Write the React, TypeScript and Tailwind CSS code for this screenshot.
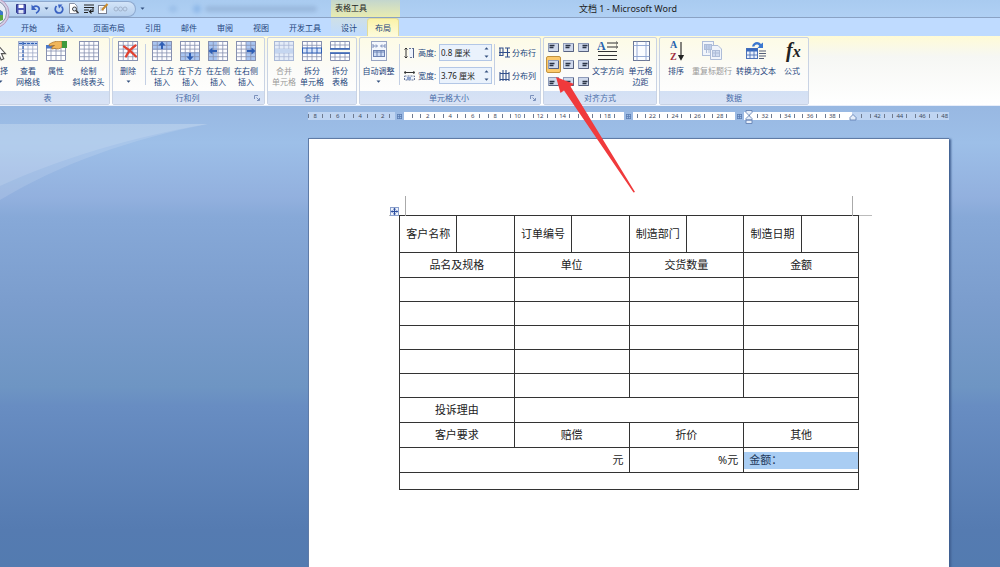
import type { ReactNode } from "react";

/* ---------- icons ---------- */

const LINE = "#8791b0";
const BLUE = "#2f5fb5";

type GridProps = { cols?: number; rows?: number; children?: ReactNode; line?: string; under?: ReactNode };

function GridIcon({ cols = 4, rows = 5, children, line = LINE, under }: GridProps) {
  const xs = Array.from({ length: cols - 1 }, (_, i) => 0.5 + (19 / cols) * (i + 1));
  const ys = Array.from({ length: rows - 1 }, (_, i) => 0.5 + (19 / rows) * (i + 1));
  return (
    <svg width="20" height="20" viewBox="0 0 20 20" aria-hidden="true">
      <rect x="0.5" y="0.5" width="19" height="19" fill="#fdfdff" />
      {under}
      <path
        d={xs.map((x) => `M${x} 0.5V19.5`).join("") + ys.map((y) => `M0.5 ${y}H19.5`).join("")}
        stroke={line}
        strokeWidth="0.8"
        fill="none"
      />
      <rect x="0.5" y="0.5" width="19" height="19" fill="none" stroke={line} />
      {children}
    </svg>
  );
}

const CursorIcon = () => (
  <svg width="20" height="20" viewBox="0 0 20 20" aria-hidden="true">
    <path d="M5 1V17L8.8 13.5L11.2 19L13.8 17.8L11.4 12.6H15.5Z" fill="#fff" stroke="#555" strokeWidth="1.1" />
  </svg>
);

const ViewGridIcon = () => (
  <GridIcon under={<rect x="1" y="1" width="18" height="4" fill="#b7cdf0" />} line="#a0abc8">
    <path d="M1 2.5H19M5 1V19" stroke={BLUE} strokeWidth="1.2" strokeDasharray="3 1" />
  </GridIcon>
);

const PropertiesIcon = () => (
  <svg width="22" height="20" viewBox="0 0 22 20" aria-hidden="true">
    <path d="M1.5 5.500H20.500V19.500H1.500Z" fill="#fff" stroke={LINE} />
    <path d="M1.500 10H20.500M1.500 14.500H20.500M6 5V19.500M11 5V19.500M16 5V19.500" stroke={LINE} strokeWidth="0.8" />
    <rect x="1" y="4" width="11" height="3.500" fill="#4b79c9" />
    <path d="M4 3.500C7 1 12 -0.500 17 0.500V6C15 8 12 8.500 10 7.500L7 8C6 6.500 8 5 9.500 4.500L4.500 5Z" fill="#f0b65a" stroke="#a4671c" strokeWidth="0.7" />
    <rect x="17" y="0" width="5" height="7" fill="#3f9a3c" />
  </svg>
);

const DeleteIcon = () => (
  <GridIcon>
    <path d="M6 5.500Q12 9 18 15.500M17.500 4.500Q11 9 8 15.500" stroke="#e2412f" strokeWidth="2.200" fill="none" strokeLinecap="round" />
  </GridIcon>
);

const InsertAbove = () => (
  <GridIcon under={<rect x="1" y="1" width="18" height="8" fill="#a9c5f1" />}>
    <path d="M10 0.500L13.500 4.500H11V8H9V4.500H6.500Z" fill={BLUE} />
  </GridIcon>
);
const InsertBelow = () => (
  <GridIcon under={<rect x="1" y="11" width="18" height="8" fill="#a9c5f1" />}>
    <path d="M10 19.500L13.500 15.500H11V12H9V15.500H6.500Z" fill={BLUE} />
  </GridIcon>
);
const InsertLeft = () => (
  <GridIcon under={<rect x="1" y="1" width="8" height="18" fill="#a9c5f1" />}>
    <path d="M0.500 10L4.500 6.500V9H9V11H4.500V13.500Z" fill={BLUE} />
  </GridIcon>
);
const InsertRight = () => (
  <GridIcon under={<rect x="10" y="1" width="9" height="18" fill="#a9c5f1" />}>
    <path d="M19.500 10L15.500 6.500V9H11V11H15.500V13.500Z" fill={BLUE} />
  </GridIcon>
);

const MergeIcon = () => (
  <GridIcon line="#a9b8d6" under={<rect x="1" y="1" width="18" height="18" fill="#e4ecf8" />}>
    <rect x="1" y="8" width="18" height="4" fill="#c5d6f0" />
  </GridIcon>
);
const SplitCellsIcon = () => (
  <GridIcon>
    <rect x="0.500" y="7" width="19" height="5" fill="#dbe7fb" stroke={BLUE} />
    <path d="M5 7V12M10 7V12M15 7V12" stroke={BLUE} />
  </GridIcon>
);
const SplitTableIcon = () => (
  <svg width="20" height="20" viewBox="0 0 20 20" aria-hidden="true">
    <path d="M0.500 0.500H19.500V7.500H0.500ZM0.500 12.500H19.500V19.500H0.500Z" fill="#fff" stroke={LINE} />
    <path d="M5 0.500V7.500M10 0.500V7.500M15 0.500V7.500M0.500 4H19.500M5 12.500V19.500M10 12.500V19.500M15 12.500V19.500M0.500 16H19.500" stroke={LINE} strokeWidth="0.800" />
    <path d="M0 8H20M0 12H20" stroke={BLUE} strokeWidth="1.300" />
  </svg>
);

const AutoFitIcon = () => (
  <svg width="20" height="20" viewBox="0 0 20 20" aria-hidden="true">
    <rect x="2.500" y="0.500" width="15" height="19" fill="#f4f7fd" stroke="#98a4c2" />
    <path d="M4 5H8M12 5H16M4 3V7M16 3V7M8.500 5L7 3.500M8.500 5L7 6.500M11.500 5L13 3.500M11.500 5L13 6.500" stroke="#7184b3" strokeWidth="0.900" />
    <rect x="4.500" y="9.500" width="11" height="6" fill="#cfddf5" stroke="#6d82b3" />
    <path d="M8 9.500V15.500M12 9.500V15.500M4.500 11H15.500" stroke="#6d82b3" />
  </svg>
);

const HeightIcon = () => (
  <svg width="11" height="12" viewBox="0 0 11 12" aria-hidden="true">
    <path d="M2 1V11M0.500 2.500L2 1L3.500 2.500M0.500 9.500L2 11L3.500 9.500" stroke="#333" fill="none" />
    <path d="M5 1.500H9.500V10.500H5" fill="#eef3fc" stroke="#6b7898" strokeDasharray="2 1" />
    <path d="M9.500 1V11" stroke="#4f5f88" />
  </svg>
);
const WidthIcon = () => (
  <svg width="11" height="12" viewBox="0 0 11 12" aria-hidden="true">
    <path d="M0.500 2.500H10.500M1.500 1L0.500 2.500L1.500 4M9.500 1L10.500 2.500L9.500 4" stroke="#333" fill="none" />
    <rect x="0.500" y="6" width="10" height="4" fill="#eef3fc" stroke="#6b7898" strokeDasharray="2 1" />
    <rect x="3" y="7" width="4" height="3" fill="#8da3cf" />
  </svg>
);
const DistributeRows = () => (
  <svg width="11" height="11" viewBox="0 0 11 11" aria-hidden="true">
    <path d="M0 1H4.500M6 1H11M0 5.500H11M6 10H11M0 8.500H4.500M1 1V8.500M4 1V8.500M8.500 1V10" stroke="#33508c" strokeWidth="1.100" fill="none" />
  </svg>
);
const DistributeCols = () => (
  <svg width="11" height="11" viewBox="0 0 11 11" aria-hidden="true">
    <path d="M1 2V11M4 0V11M7 0V11M10 2V11M1 3.500H10M1 9.500H10" stroke="#33508c" strokeWidth="1.100" fill="none" />
  </svg>
);

const TextDirectionIcon = () => (
  <svg className="overflow-visible" width="22" height="20" viewBox="0 0 22 20" aria-hidden="true">
    <text x="0" y="9" fontSize="12" fontWeight="700" fontFamily="Liberation Serif, serif" fill="#2763ae">A</text>
    <path d="M10 2H20M10 6H20M1 10.500H20M1 14.500H20M1 18.500H20" stroke="#333" strokeWidth="1.200" />
    <path d="M19 0.500L21 2L19 3.500M19 4.500L21 6L19 7.500" stroke="#333" fill="none" strokeWidth="0.700" />
  </svg>
);
const MarginsIcon = () => (
  <svg width="20" height="20" viewBox="0 0 20 20" aria-hidden="true">
    <rect x="2.500" y="0.500" width="16" height="19" fill="#fbfcff" stroke="#6c7795" />
    <path d="M6 0.500V19.500M15 0.500V19.500M2.500 4.500H18.500M2.500 15.500H18.500" stroke="#8aa2d0" strokeWidth="0.900" />
  </svg>
);
const SortIcon = () => (
  <svg className="overflow-visible" width="20" height="20" viewBox="0 0 20 20" aria-hidden="true">
    <text x="4" y="7" fontSize="10" fontWeight="700" fontFamily="Liberation Serif, serif" fill="#2763ae">A</text>
    <text x="4" y="19" fontSize="10" fontWeight="700" fontFamily="Liberation Serif, serif" fill="#a03040">Z</text>
    <path d="M15 1V17.500M12.800 14.500L15 18.500L17.200 14.500Z" stroke="#222" fill="#222" strokeWidth="1.100" />
  </svg>
);
const RepeatHeaderIcon = () => (
  <svg width="20" height="20" viewBox="0 0 20 20" aria-hidden="true">
    <g stroke="#aebdd8" fill="#f1f5fb">
      <rect x="0.500" y="0.500" width="11" height="14" />
      <path d="M8.500 4.500H16L19.500 8V18.500H8.500Z" />
      <rect x="2.500" y="3.500" width="7" height="5" fill="#bdcdea" />
      <rect x="10.500" y="9.500" width="7" height="6" fill="#cfdbf0" />
      <path d="M4.500 3.500V12M7 3.500V12M10.500 12H17.500M13.500 9.500V15.500" />
    </g>
  </svg>
);
const ConvertIcon = () => (
  <svg width="20" height="20" viewBox="0 0 20 20" aria-hidden="true">
    <rect x="0.500" y="7.500" width="11" height="10" fill="#e9f0fc" stroke="#4d72b8" />
    <path d="M0.500 9H11.500" stroke="#3769be" strokeWidth="3" />
    <path d="M4 9V17.500M8 9V17.500M0.500 14H11.500" stroke="#4d72b8" strokeWidth="0.900" />
    <path d="M13 10H20M13 12.500H20M13 15H20M13 17.500H18" stroke="#555f78" strokeWidth="1.100" />
    <path d="M6 5.500C7 0.500 12.500 -0.500 15 3L17 1.500V7H11.500L13.300 5C11.500 2.800 9 3.300 8.500 5.500Z" fill="#3b78d0" />
  </svg>
);
const FormulaIcon = () => (
  <svg className="overflow-visible" width="20" height="20" viewBox="0 0 20 20" aria-hidden="true">
    <text x="4" y="16" fontSize="20" fontWeight="700" fontStyle="italic" fontFamily="Liberation Serif, serif" fill="#222">
      f<tspan fontSize="16">x</tspan>
    </text>
  </svg>
);

function AlignIcon({ h, v }: { h: number; v: number }) {
  const x = [1.5, 2.5, 4.5][h];
  const y = [2, 3, 4][v];
  return (
    <svg width="11" height="9" viewBox="0 0 11 9" aria-hidden="true">
      <rect x="0.500" y="0.500" width="10" height="8" fill="#cfd9ec" stroke="#8f9cba" />
      <path d="M10.500 1V8.500H1" stroke="#57627f" fill="none" />
      <path d={`M${x} ${y + 0.5}H${x + 5}M${x} ${y + 2.5}H${x + 4}`} stroke="#2b3446" strokeWidth="1.300" />
    </svg>
  );
}

const Caret = () => (
  <svg width="5" height="3" viewBox="0 0 5 3" aria-hidden="true">
    <path d="M0.500 0.500H4.500L2.500 2.700Z" fill="#33507f" />
  </svg>
);

const Launcher = () => (
  <svg width="6" height="6" viewBox="0 0 6 6" aria-hidden="true">
    <path d="M0.500 4V0.500H4M2.500 2.500L5 5M5.500 3V5.500H3" stroke="#7088b5" fill="none" strokeWidth="0.900" />
  </svg>
);

/* ---------- ribbon parts ---------- */

type ToolProps = { icon: ReactNode; lines: string[]; width?: string; disabled?: boolean; caret?: boolean };

function Tool({ icon, lines, width = "w-7", disabled = false, caret = false }: ToolProps) {
  return (
    <button
      type="button"
      disabled={disabled}
      className={`flex shrink-0 flex-col items-center pt-[3px] ${width} ${disabled ? "text-[#9a9a9a]" : "text-[#24457c]"}`}
    >
      {icon}
      <span className="mt-1 flex flex-col items-center whitespace-nowrap leading-[11px]">
        {lines.map((l) => (
          <span key={l}>{l}</span>
        ))}
        {caret && (
          <span className="flex h-[11px] items-center">
            <Caret />
          </span>
        )}
      </span>
    </button>
  );
}

type GroupProps = { title: string; children: ReactNode; launcher?: boolean; className?: string };

function Group({ title, children, launcher = false, className = "" }: GroupProps) {
  return (
    <section
      aria-label={title}
      className="flex shrink-0 flex-col rounded-[2px] border border-[#c9d3e4] bg-linear-to-b from-[#fdfbe6] via-[#fbfbf9] to-white first:-ml-[15px] first:pl-0"
    >
      <div className={`flex h-[53px] ${className}`}>{children}</div>
      <div className="flex h-[13px] items-center bg-linear-to-b from-[#d3e0f4] to-[#d9e3f5] text-[#4a6da8]">
        <span className="flex-1 text-center leading-[12px]">{title}</span>
        {launcher && (
          <button type="button" aria-label={`${title}选项`} className="-ml-2 mr-1">
            <Launcher />
          </button>
        )}
      </div>
    </section>
  );
}

const Separator = () => <div className="mx-0.5 my-1.5 w-px shrink-0 bg-[#c3cfe4]" />;

function SizeField({ id, label, value, icon }: { id: string; label: string; value: string; icon: ReactNode }) {
  return (
    <div className="flex h-[17px] items-center">
      {icon}
      <label htmlFor={id} className="ml-[3px] w-[21px] whitespace-nowrap text-[#24457c]">
        {label}
      </label>
      <div className="flex h-[17px] items-center border border-[#b3c7e6] bg-[#eaf2fc]">
        <input id={id} defaultValue={value} className="h-[15px] w-[42px] pl-px text-[#222] outline-none" />
        <span className="flex w-[9px] flex-col items-center gap-[5px]">
          <button type="button" aria-label={`增加${label}`} className="rotate-180">
            <Caret />
          </button>
          <button type="button" aria-label={`减少${label}`}>
            <Caret />
          </button>
        </span>
      </div>
    </div>
  );
}

/* ---------- window chrome ---------- */

function QuickAccess() {
  return (
    <div className="flex h-4 w-[136px] items-center rounded-r-full border border-l-0 border-[#8ea9cf] bg-linear-to-b from-[#d3e4f8] to-[#b5cfee] pl-4">
      <button type="button" aria-label="保存">
        <svg width="10" height="10" viewBox="0 0 10 10">
          <path d="M0.500 0.500H9.500V9.500H1.500L0.500 8.500Z" fill="#4a55b5" stroke="#30398a" />
          <rect x="2.500" y="0.500" width="5" height="3.500" fill="#fff" />
          <rect x="2.500" y="6" width="5" height="3.500" fill="#dfe5f5" />
        </svg>
      </button>
      <button type="button" aria-label="撤消" className="ml-[5px] flex items-center gap-[3px]">
        <svg width="10" height="10" viewBox="0 0 10 10">
          <path d="M2 3.500C5 1 9 2.500 8 6C7.500 7.500 6.500 8.500 5 9.200" stroke="#3a62c2" strokeWidth="1.700" fill="none" />
          <path d="M0.500 0.500V6H5.500Z" fill="#3a62c2" />
        </svg>
        <Caret />
      </button>
      <button type="button" aria-label="重复" className="ml-[5px]">
        <svg width="10" height="10" viewBox="0 0 10 10">
          <path d="M2.500 2C0 5 1.500 9 5 9C8.500 9 10 5 7.500 2.500" stroke="#3a62c2" strokeWidth="1.700" fill="none" />
          <path d="M4 0.500H8.500L5 4.500Z" fill="#3a62c2" />
        </svg>
      </button>
      <button type="button" aria-label="打印预览" className="ml-[5px]">
        <svg width="10" height="11" viewBox="0 0 10 11">
          <path d="M0.500 0.500H5.500L8 3V10.500H0.500Z" fill="#fff" stroke="#8a93a8" />
          <circle cx="5.500" cy="6" r="2" fill="#dbe9fb" stroke="#444" />
          <path d="M7 7.500L9.500 10.300" stroke="#333" strokeWidth="1.400" />
        </svg>
      </button>
      <button type="button" aria-label="自动换行" className="ml-[5px]">
        <svg width="10" height="10" viewBox="0 0 10 10">
          <path d="M0 1H10M0 3.500H10M0 6H5M0 8.500H4M9 4V7.500H6M7.500 5.500L5.500 7.500L7.500 9.500" stroke="#222" strokeWidth="1.100" fill="none" />
        </svg>
      </button>
      <button type="button" aria-label="编辑" className="ml-1">
        <svg width="11" height="11" viewBox="0 0 11 11">
          <rect x="0.500" y="2.500" width="8" height="8" fill="#fff" stroke="#777f92" />
          <path d="M2 5H7M2 7H6" stroke="#a9b0c0" />
          <path d="M4 7L9.500 1" stroke="#c98a2b" strokeWidth="2" />
        </svg>
      </button>
      <svg className="ml-1" width="15" height="8" viewBox="0 0 15 8" aria-hidden="true">
        <g fill="none" stroke="#a2b3cc">
          <circle cx="3" cy="4" r="2" />
          <circle cx="7.500" cy="4" r="2" />
          <circle cx="12" cy="4" r="2" />
        </g>
      </svg>
    </div>
  );
}

function OfficeButton() {
  return (
    <button type="button" aria-label="Office 按钮" className="absolute top-0 left-0 z-10">
      <svg width="12" height="30" viewBox="0 0 12 30">
        <circle cx="-6" cy="13" r="15" fill="#d6cfe6" stroke="#b79ac0" />
        <circle cx="-6" cy="13" r="12.500" fill="#e9eef6" stroke="#8893aa" />
        <path d="M0 10L3 12V20L0 21Z" fill="#58a83e" />
        <path d="M0 10L3 12V15H0Z" fill="#3d78c9" />
      </svg>
    </button>
  );
}

function TitleBar() {
  return (
    <header className="flex h-[18px] items-center border-b border-[#8aa2c4] bg-linear-to-b from-[#a9cbf0] to-[#b0d0f4]">
      <QuickAccess />
      <button type="button" aria-label="自定义快速访问工具栏" className="ml-1">
        <Caret />
      </button>
      <div className="flex flex-1 items-center">
        <div className="flex w-[186px] items-center gap-1 pl-6 opacity-30 blur-[2px]" aria-hidden="true">
          <div className="h-1.5 w-2 rounded bg-[#6f9bd0]" />
          <div className="ml-3 h-2 w-2 rounded bg-[#4a86d0]" />
          <div className="h-1.5 w-28 rounded bg-[#6c87ac]" />
        </div>
        <div className="h-[17px] w-[69px] bg-linear-to-b from-[#c3d6cd] to-[#e9ecb0] pl-1 leading-[16px] text-[#222]">
          表格工具
        </div>
        <h1 className="ml-[179px] whitespace-nowrap text-[9px] leading-[17px] text-[#222]">文档 1 - Microsoft Word</h1>
      </div>
    </header>
  );
}

const TABS = ["开始", "插入", "页面布局", "引用", "邮件", "审阅", "视图", "开发工具", "设计", "布局"];

function Tabs() {
  return (
    <nav className="flex h-[18px] bg-[#bfdbff] pl-[11px]">
      {TABS.map((t) => (
        <button
          key={t}
          type="button"
          className={`leading-[17px] text-[#24457c] ${
            t === "布局"
              ? "rounded-t-[3px] border border-b-0 border-[#e3dc9a] bg-linear-to-b from-[#fbf3a6] to-[#fdfbdc] px-[7px]"
              : t === "设计"
                ? "bg-linear-to-b from-[#cfe0e6] to-[#bfdbff] px-[10px]"
                : "px-[10px]"
          }`}
        >
          {t}
        </button>
      ))}
    </nav>
  );
}

function Ribbon() {
  return (
    <div className="flex h-[70px] gap-0.5 overflow-hidden border-b border-[#e8eefa] bg-linear-to-b from-[#fffbd6] via-[#f6f7f4] via-30% to-white pt-px">
      <Group title="表" className="pr-0.5">
        <Tool icon={<CursorIcon />} lines={["选择"]} caret />
        <Tool icon={<ViewGridIcon />} lines={["查看", "网格线"]} />
        <Tool icon={<PropertiesIcon />} lines={["属性"]} />
        <Tool icon={<GridIcon />} lines={["绘制", "斜线表头"]} width="w-[37px]" />
      </Group>
      <Group title="行和列" launcher className="pr-1">
        <Tool icon={<DeleteIcon />} lines={["删除"]} width="w-[30px]" caret />
        <Separator />
        <Tool icon={<InsertAbove />} lines={["在上方", "插入"]} />
        <Tool icon={<InsertBelow />} lines={["在下方", "插入"]} />
        <Tool icon={<InsertLeft />} lines={["在左侧", "插入"]} />
        <Tool icon={<InsertRight />} lines={["在右侧", "插入"]} />
      </Group>
      <Group title="合并" className="px-0.5">
        <Tool icon={<MergeIcon />} lines={["合并", "单元格"]} disabled />
        <Tool icon={<SplitCellsIcon />} lines={["拆分", "单元格"]} />
        <Tool icon={<SplitTableIcon />} lines={["拆分", "表格"]} />
      </Group>
      <Group title="单元格大小" launcher className="pr-1">
        <Tool icon={<AutoFitIcon />} lines={["自动调整"]} width="w-[37px]" caret />
        <Separator />
        <div className="flex flex-col gap-1.5 pt-1.5 pl-0.5">
          <SizeField id="row-height" label="高度:" value="0.8 厘米" icon={<HeightIcon />} />
          <SizeField id="col-width" label="宽度:" value="3.76 厘米" icon={<WidthIcon />} />
        </div>
        <Separator />
        <div className="flex flex-col gap-1.5 pt-1.5 pl-0.5 text-[#24457c]">
          <button type="button" className="flex h-[17px] items-center gap-0.5 whitespace-nowrap">
            <DistributeRows />
            分布行
          </button>
          <button type="button" className="flex h-[17px] items-center gap-0.5 whitespace-nowrap">
            <DistributeCols />
            分布列
          </button>
        </div>
      </Group>
      <Group title="对齐方式">
        <div className="grid grid-cols-3 content-start pt-px pl-0.5">
          {[0, 1, 2].flatMap((v) =>
            [0, 1, 2].map((h) => (
              <button
                key={`${v}${h}`}
                type="button"
                aria-label={`对齐 ${v * 3 + h + 1}`}
                className={`flex h-[17px] w-[15px] items-center justify-center ${
                  v === 1 && h === 0 ? "rounded-[2px] border border-[#c2923e] bg-[#fcc96b]" : ""
                }`}
              >
                <AlignIcon h={h} v={v} />
              </button>
            )),
          )}
        </div>
        <Tool icon={<TextDirectionIcon />} lines={["文字方向"]} width="w-[34px]" />
        <Tool icon={<MarginsIcon />} lines={["单元格", "边距"]} width="w-[31px]" />
      </Group>
      <Group title="数据" className="px-0.5">
        <Tool icon={<SortIcon />} lines={["排序"]} />
        <Tool icon={<RepeatHeaderIcon />} lines={["重复标题行"]} width="w-11" disabled />
        <Tool icon={<ConvertIcon />} lines={["转换为文本"]} width="w-11" />
        <Tool icon={<FormulaIcon />} lines={["公式"]} />
      </Group>
    </div>
  );
}

/* ---------- document ---------- */

const RULER_VALUES = Array.from({ length: 29 }, (_, i) => (i - 4) * 2);
const HIDDEN_VALUES = [0, 20, 30, 40];

const Marker = () => (
  <span className="flex w-[9px] items-center justify-center bg-[#9dbbe4]">
    <svg width="5" height="5" viewBox="0 0 5 5" aria-hidden="true">
      <path d="M0 0.500H5M0 2.500H5M0 4.500H5M0.500 0V5M2.500 0V5M4.500 0V5" stroke="#5d7fb4" strokeWidth="0.800" />
    </svg>
  </span>
);

function Ruler() {
  return (
    <div className="relative h-2 text-[6px] leading-[8px] text-[#3f4b60]">
      <div className="absolute inset-0 flex" aria-hidden="true">
        <span className="grow-[87] basis-0 bg-[#c0d5f2]" />
        <Marker />
        <span className="grow-[220] basis-0 bg-white" />
        <Marker />
        <span className="grow-[103] basis-0 bg-white" />
        <Marker />
        <span className="grow-[108] basis-0 bg-white" />
        <span className="grow-[97] basis-0 bg-[#c0d5f2]" />
      </div>
      <div className="relative overflow-hidden">
        <div className="-mr-[7px] -ml-1 flex">
          {RULER_VALUES.map((n) => (
            <span key={n} className="flex flex-1 basis-0 items-center justify-center">
              {HIDDEN_VALUES.includes(n) ? (
                <i className="ml-[14px] h-1 w-px bg-[#6f7b90]" />
              ) : (
                <span className="flex w-[15px] items-center justify-between">
                  <i className="h-1 w-px bg-[#6f7b90]" />
                  {Math.abs(n)}
                  <i className="h-1 w-px bg-[#6f7b90]" />
                </span>
              )}
            </span>
          ))}
        </div>
      </div>
      <svg className="absolute -top-0.5 left-[437px]" width="8" height="15" viewBox="0 0 8 15" aria-hidden="true">
        <path d="M1 0.500H7V2.500L4 5.500L1 2.500ZM4 5.500L7 8.500V10H1V8.500ZM1 10H7V13.500H1Z" fill="#e6eefa" stroke="#6684b5" strokeWidth="0.900" />
      </svg>
      <svg className="absolute top-0.5 left-[541px]" width="8" height="7" viewBox="0 0 8 7" aria-hidden="true">
        <path d="M4 0.500L7 3.500V6H1V3.500Z" fill="#e6eefa" stroke="#6684b5" strokeWidth="0.900" />
      </svg>
    </div>
  );
}

const CELL = "border border-[#333] p-0 font-normal";

function OrderTable() {
  return (
    <table className="w-full table-fixed border-collapse text-center text-[11px] leading-[16px] text-[#222]">
      <tbody>
        <tr className="h-[37px]">
          {["客户名称", "订单编号", "制造部门", "制造日期"].flatMap((t) => [
            <th key={t} scope="row" className={`${CELL} whitespace-nowrap`}>
              {t}
            </th>,
            <td key={`${t}-value`} className={CELL} />,
          ])}
        </tr>
        <tr className="h-[25px]">
          {["品名及规格", "单位", "交货数量", "金额"].map((t) => (
            <th key={t} colSpan={2} scope="col" className={CELL}>
              {t}
            </th>
          ))}
        </tr>
        {[0, 1, 2, 3, 4].map((r) => (
          <tr key={r} className="h-6">
            {[0, 1, 2, 3].map((c) => (
              <td key={c} colSpan={2} className={CELL} />
            ))}
          </tr>
        ))}
        <tr className="h-[25px]">
          <th colSpan={2} scope="row" className={CELL}>
            投诉理由
          </th>
          <td colSpan={6} className={CELL} />
        </tr>
        <tr className="h-[25px]">
          {["客户要求", "赔偿", "折价", "其他"].map((t) => (
            <th key={t} colSpan={2} scope="col" className={CELL}>
              {t}
            </th>
          ))}
        </tr>
        <tr className="h-[25px] text-right">
          <td colSpan={4} className={CELL}>
            <span className="pr-[5px]">元</span>
          </td>
          <td colSpan={2} className={CELL}>
            <span className="pr-[5px]">%元</span>
          </td>
          <td colSpan={2} className={CELL}>
            <div className="h-[17px] bg-[#a9cdf3] pl-[5px] text-left text-[#1f3a5c]">金额：</div>
          </td>
        </tr>
        <tr className="h-[17px]">
          <td colSpan={8} className={CELL} />
        </tr>
      </tbody>
    </table>
  );
}

function Page() {
  return (
    <main className="mt-[18px] flex-1 border-t border-l border-[#5f7ba6] bg-white px-[90px] pt-[76px] shadow-[2px_1px_2px_#3f5f90]">
      <div className="relative">
        <OrderTable />
        <div className="absolute -top-[19px] left-1.5 h-5 w-px bg-[#aaa]" />
        <div className="absolute top-0 -left-[10px] h-px w-[10px] bg-[#bbb]" />
        <div className="absolute -top-[19px] right-1.5 h-5 w-px bg-[#aaa]" />
        <div className="absolute top-0 -right-[13px] h-px w-[13px] bg-[#bbb]" />
        <svg className="absolute -top-2 -left-[9px]" width="9" height="9" viewBox="0 0 9 9" aria-hidden="true">
          <rect x="0.500" y="0.500" width="8" height="8" fill="#eef3fc" stroke="#8ba0cc" />
          <path d="M4.500 1.500V7.500M1.500 4.500H7.500" stroke="#2d4fa0" strokeWidth="1.200" />
          <path d="M4.500 0.800L6 2.500H3ZM4.500 8.200L6 6.500H3ZM0.800 4.500L2.500 3V6ZM8.200 4.500L6.500 3V6Z" fill="#2d4fa0" />
        </svg>
      </div>
    </main>
  );
}

export default function App() {
  return (
    <div className="relative flex min-h-screen flex-col overflow-hidden font-['Noto_Sans','Noto_Sans_CJK_SC',sans-serif] text-[8px]">
      <OfficeButton />
      <TitleBar />
      <Tabs />
      <Ribbon />
      <div className="relative flex flex-1 flex-col bg-[linear-gradient(to_bottom,#98b8e2_0%,#9dbfe8_8%,#92b0de_20%,#87a9d8_24%,#7b9dcd_43%,#6e95c3_61%,#688dc2_65%,#557bb1_92%,#537bb0_100%)] pt-1.5 pr-[51px] pl-[308px]">
        <svg className="absolute top-[18px] left-0" width="210" height="80" viewBox="0 0 210 80" aria-hidden="true">
          <path d="M0 0H208C130 15 60 40 0 76Z" fill="#ffffff" fillOpacity="0.120" />
          <path d="M0 0H208C130 13 60 35 0 62Z" fill="#ffffff" fillOpacity="0.120" />
        </svg>
        <Ruler />
        <Page />
      </div>
      <svg className="pointer-events-none absolute top-[76px] left-[555px] z-20" width="82" height="118" viewBox="0 0 82 118" aria-hidden="true">
        <path d="M1 1L19 8L15.500 10.500L80 116L78.500 116.500L9 14.500L5.500 17Z" fill="#f03a3c" />
      </svg>
    </div>
  );
}
